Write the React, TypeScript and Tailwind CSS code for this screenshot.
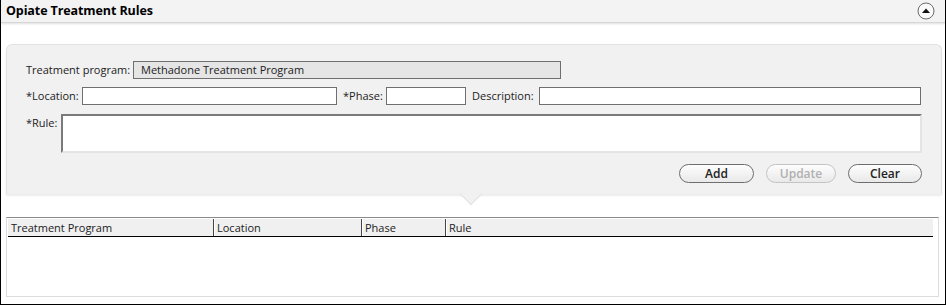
import { useState } from 'react';

const font = { fontFamily: '"Open Sans", "Noto Sans", Arial, sans-serif' };

function PillButton({ label, disabled }: { label: string; disabled?: boolean }) {
  return (
    <button
      disabled={disabled}
      className={`block h-[19px] w-full rounded-full border bg-gradient-to-b from-[#fdfdfd] to-[#e9e9e9] text-[12px] font-semibold leading-none ${
        disabled ? 'border-[#c4c4c4] text-[#b0b0b0]' : 'border-[#6e6e6e] text-[#222]'
      }`}
    >
      {label}
    </button>
  );
}

export default function App() {
  const [location, setLocation] = useState('');
  const [phase, setPhase] = useState('');
  const [description, setDescription] = useState('');
  const [rule, setRule] = useState('');

  const inputCls =
    'h-[18px] shrink-0 border border-[#6f6f6f] bg-white px-1 text-[11px] outline-none';

  return (
    <div
      className="flex h-[305px] w-[946px] flex-col border-x border-b border-black bg-white text-[#222]"
      style={font}
    >
      {/* header */}
      <div className="flex h-[23px] shrink-0 items-center justify-between border-b border-[#d6d6d6] bg-[#f3f3f3] pl-[5px] pr-[10px] shadow-[0_1px_2px_rgba(0,0,0,0.12)]">
        <span className="text-[12.5px] font-bold tracking-[-0.1px] text-black">Opiate Treatment Rules</span>
        <svg width="18" height="18" viewBox="0 0 18 18">
          <circle cx="9" cy="9" r="8" fill="#fafafa" stroke="#6a6a6a" strokeWidth="1" />
          <path d="M5 11 L9 6.5 L13 11 Z" fill="#111" />
        </svg>
      </div>

      {/* form panel */}
      <div className="pl-[5px] pr-[3px] pt-[21px]">
        <div className="relative rounded-t-[6px] border border-b-0 border-[#e2e2e2] bg-[#f1f1f1] pb-[11px] pl-[19px] pr-[19px] pt-[16px] shadow-[0_2px_2px_rgba(0,0,0,0.08)]">
          <div className="flex items-center text-[11px]">
            <span className="w-[107px] shrink-0 whitespace-nowrap">Treatment program:</span>
            <div className="flex h-[18px] w-[428px] shrink-0 items-center border border-[#6f6f6f] bg-[#e5e5e5] px-[7px] text-[11px]">
              Methadone Treatment Program
            </div>
          </div>

          <div className="mt-[8px] flex items-center whitespace-nowrap text-[11px]">
            <span className="w-[56px] shrink-0">*Location:</span>
            <input value={location} onChange={(e) => setLocation(e.target.value)} className={`${inputCls} w-[255px]`} />
            <span className="ml-[6px] w-[43px] shrink-0">*Phase:</span>
            <input value={phase} onChange={(e) => setPhase(e.target.value)} className={`${inputCls} w-[80px]`} />
            <span className="ml-[6px] w-[67px] shrink-0">Description:</span>
            <input value={description} onChange={(e) => setDescription(e.target.value)} className={`${inputCls} w-[382px]`} />
          </div>

          <div className="mt-[9px] flex items-start text-[11px]">
            <span className="w-[35px] shrink-0 pt-[1px]">*Rule:</span>
            <textarea
              value={rule}
              onChange={(e) => setRule(e.target.value)}
              className="block h-[39px] w-[861px] shrink-0 resize-none border-[2px] border-b-[#e4e4e4] border-l-[#7a7a7a] border-r-[#e4e4e4] border-t-[#7a7a7a] bg-white px-1 text-[11px] outline-none"
            />
          </div>

          <div className="mt-[11px] flex justify-end gap-[12px]">
            <div className="w-[75px]"><PillButton label="Add" /></div>
            <div className="w-[70px]"><PillButton label="Update" disabled /></div>
            <div className="w-[74px]"><PillButton label="Clear" /></div>
          </div>

          {/* pointer */}
          <div className="absolute -bottom-[8px] left-[456px] h-[16px] w-[16px] rotate-45 border-b border-r border-[#e2e2e2] bg-[#f1f1f1]" />
        </div>
      </div>

      {/* table */}
      <div className="ml-[5px] mr-[6px] mt-[23px] flex h-[80px] flex-col border border-[#dcdcdc] border-t-[#8a8a8a] bg-white p-[1px] pr-[5px]">
        <div className="flex h-[18px] border-b border-black bg-[#f0f0f0] text-[11px]">
          <div className="w-[206px] border-r border-[#444] pl-[3px] leading-[17px]">Treatment Program</div>
          <div className="w-[148px] border-l border-r border-l-white border-r-[#444] pl-[2px] leading-[17px]">Location</div>
          <div className="w-[84px] border-l border-r border-l-white border-r-[#444] pl-[2px] leading-[17px]">Phase</div>
          <div className="flex-1 border-l border-l-white pl-[2px] leading-[17px]">Rule</div>
        </div>
      </div>
    </div>
  );
}
